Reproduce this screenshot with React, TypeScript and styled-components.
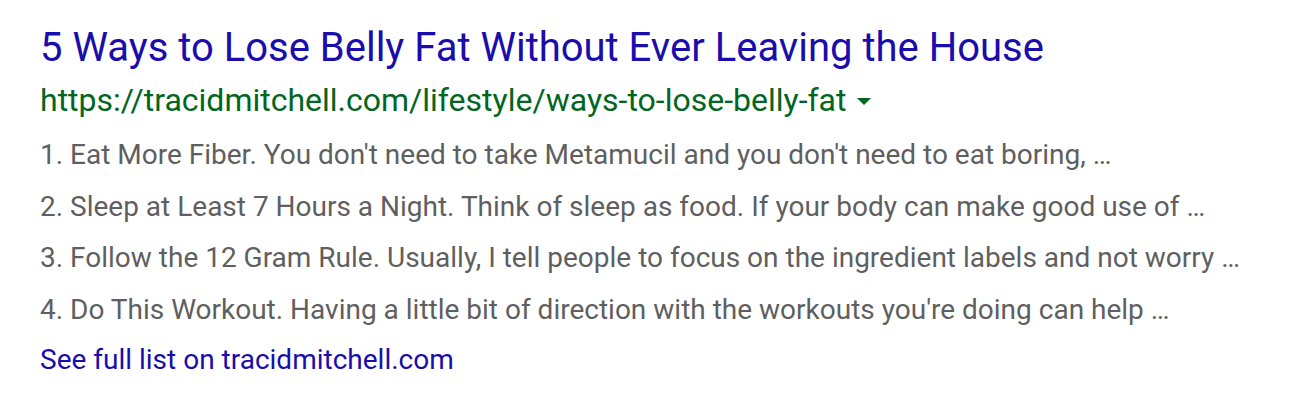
import React from "react";
import styled, { createGlobalStyle } from "styled-components";

const GlobalStyle = createGlobalStyle`
  html, body { margin: 0; padding: 0; background: #ffffff; }
  body { font-family: Roboto, Arial, sans-serif; }
`;

const Result = styled.div`
  padding: 24px 40px 0 40px;
  display: flex;
  flex-direction: column;
`;

const Title = styled.a`
  font-size: 40px;
  line-height: 48px;
  color: #1a0dab;
  text-decoration: none;
  white-space: nowrap;
`;

const UrlRow = styled.div`
  display: flex;
  align-items: center;
  gap: 11px;
  height: 56px;
`;

const Url = styled.cite`
  font-style: normal;
  font-size: 32px;
  color: #006621;
  white-space: nowrap;
`;

const Caret = styled.span`
  width: 0;
  height: 0;
  border-left: 7px solid transparent;
  border-right: 7px solid transparent;
  border-top: 7px solid #006621;
  margin-top: 3px;
`;

const List = styled.ol`
  list-style: none;
  margin: 1px 0 0 0;
  padding: 0;
`;

const Item = styled.li`
  font-size: 28px;
  line-height: 51.5px;
  color: #5f5f5f;
  white-space: nowrap;
`;

const More = styled.a`
  font-size: 28px;
  line-height: 50px;
  color: #1a0dab;
  text-decoration: none;
`;

const items = [
  "1. Eat More Fiber. You don't need to take Metamucil and you don't need to eat boring, …",
  "2. Sleep at Least 7 Hours a Night. Think of sleep as food. If your body can make good use of …",
  "3. Follow the 12 Gram Rule. Usually, I tell people to focus on the ingredient labels and not worry …",
  "4. Do This Workout. Having a little bit of direction with the workouts you're doing can help …",
];

export default function App() {
  return (
    <>
      <GlobalStyle />
      <Result>
        <Title href="#">5 Ways to Lose Belly Fat Without Ever Leaving the House</Title>
        <UrlRow>
          <Url>https://tracidmitchell.com/lifestyle/ways-to-lose-belly-fat</Url>
          <Caret />
        </UrlRow>
        <List>
          {items.map((t) => (
            <Item key={t}>{t}</Item>
          ))}
        </List>
        <More href="#">See full list on tracidmitchell.com</More>
      </Result>
    </>
  );
}
